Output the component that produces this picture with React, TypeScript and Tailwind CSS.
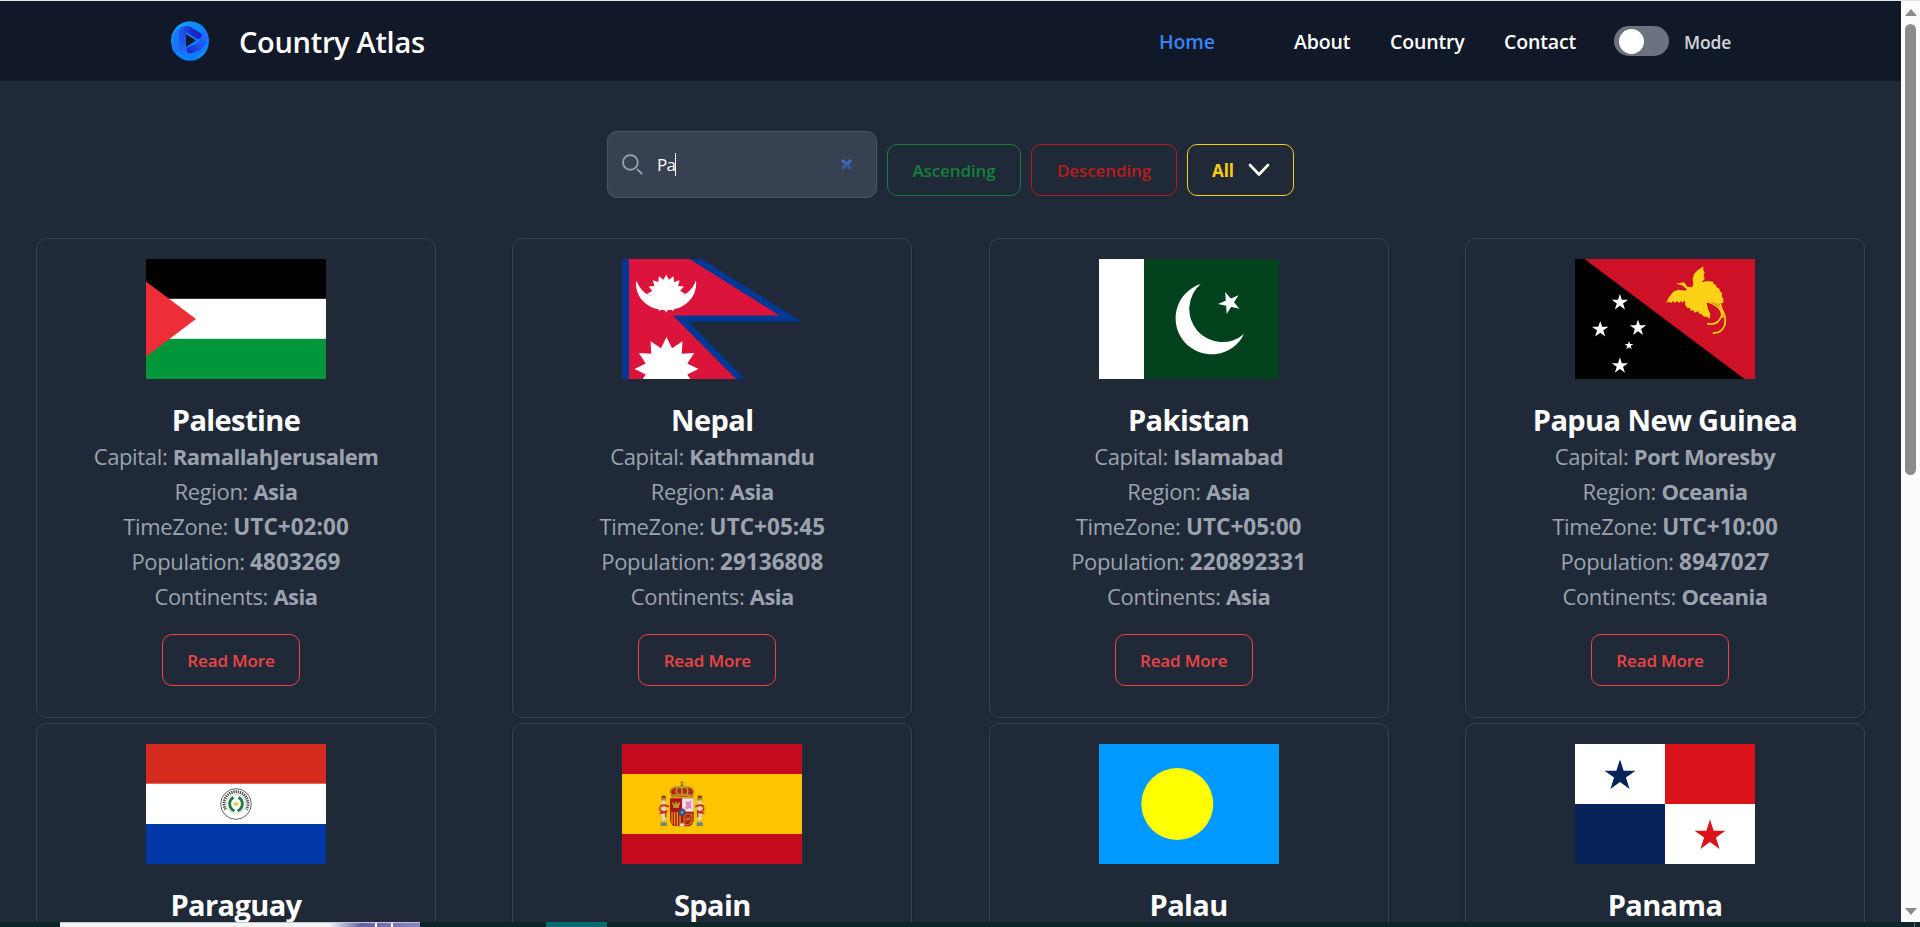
import type { ReactNode } from "react";

type Country = {
  name: string;
  flag: ReactNode;
  facts?: { capital: string; region: string; timezone: string; population: string };
};

/** Points of a star polygon centred on (cx, cy). */
function burst(cx: number, cy: number, outer: number, inner: number, tips: number) {
  return Array.from({ length: tips * 2 }, (_, i) => {
    const r = i % 2 ? inner : outer;
    const a = (Math.PI * i) / tips - Math.PI / 2;
    return `${(cx + r * Math.cos(a)).toFixed(2)},${(cy + r * Math.sin(a)).toFixed(2)}`;
  }).join(" ");
}

function Star({ x, y, r, fill }: { x: number; y: number; r: number; fill: string }) {
  return <polygon points={burst(x, y, r, r * 0.382, 5)} fill={fill} />;
}

function Flag({ children }: { children: ReactNode }) {
  return (
    <svg viewBox="0 0 180 120" className="block h-[120px] w-[180px] shrink-0">
      {children}
    </svg>
  );
}

const palestine = (
  <Flag>
    <rect width="180" height="40" fill="#000" />
    <rect y="39.8" width="180" height="40.2" fill="#fff" />
    <rect y="79.8" width="180" height="40.2" fill="#009639" />
    <path d="M0 22.5 50 60 0 97.5z" fill="#ed2e38" />
  </Flag>
);

const nepal = (
  <Flag>
    <path d="M0 0H80L180 62.800H67L123 120H0z" fill="#003893" />
    <path d="M7 0H67.500L157.500 56.500H51L114 120H7z" fill="#dc143c" />
    <path d="M14.300 21.500C18 31 24 36 31 37L44 42 57 37C64 36 70.500 31 74 21.500 76 38 62 51.200 44.200 51.200 26 51.200 12 38 14.300 21.500z" fill="#fff" />
    <polygon points={burst(44.2, 34.8, 19, 14.2, 16)} fill="#fff" />
    <polygon points={burst(44.5, 110, 32, 21.5, 12)} fill="#fff" />
  </Flag>
);

const pakistan = (
  <Flag>
    <rect width="180" height="120" fill="#01411c" />
    <rect width="45" height="120" fill="#fff" />
    <path d="M101.700 25A36 36 0 1 0 145 75 33 33 0 1 1 101.700 25z" fill="#fff" />
    <path d="M126.200 33 140.500 49.700 119 45 139.500 36.300 127.700 55z" fill="#fff" />
  </Flag>
);

const papua = (
  <Flag>
    <rect width="180" height="120" fill="#000" />
    <path d="M9.500 0H180V120H169.500z" fill="#ce1126" />
    <Star x={44.9} y={43.5} r={8.6} fill="#fff" />
    <Star x={25.2} y={70.5} r={8.6} fill="#fff" />
    <Star x={63} y={69} r={8.6} fill="#fff" />
    <Star x={54} y={86.5} r={4.6} fill="#fff" />
    <Star x={44.9} y={106.8} r={8.6} fill="#fff" />
    <g transform="scale(.33333) translate(-75 -57)">
      <path
        fill="#fcd116"
        d="M378 131 402 127 412 140 426 142 430 133 428 116 432 102 444 90 460 79 460 90 464 98 461 106 464 116 455 127 472 123 490 125 489 130 498 136 500 142 508 146 510 154 516 160 516 170 520 176 520 189 512 190 500 192 484 187 470 189 474 206 481 222 479 236 470 230 462 230 454 222 448 222 444 214 434 218 430 211 422 212 420 204 412 204 406 196 405 181 398 188 393 183 387 189 381 183 375 189 369 184 363 189 357 185 348 188 358 170 370 155 386 149 408 152 410 147 396 136z"
      />
      <g fill="none" stroke="#fcd116" strokeWidth="5">
        <path d="M476 186q38 14 40 38-10 34-45 27" />
        <path d="M496 186q38 34 28 70-9 25-36 23" />
        <path d="M506 182q14 26 12 52" />
      </g>
    </g>
  </Flag>
);

const paraguay = (
  <Flag>
    <rect width="180" height="120" fill="#fff" />
    <rect width="180" height="39.700" fill="#d52b1e" />
    <rect y="80" width="180" height="40" fill="#0038a8" />
    <circle cx="90" cy="60" r="15.300" fill="none" stroke="#3c3c3c" strokeWidth=".8" />
    <path d="M79.500 65.500A12 12 0 1 1 100.500 65.500" fill="none" stroke="#444" strokeWidth="2.800" strokeDasharray="1.300 .9" />
    <circle cx="90" cy="60" r="9.600" fill="none" stroke="#aaa" strokeWidth=".5" />
    <path d="M87.500 53.500C82.500 56 82 64 88.500 67" fill="none" stroke="#1d7a45" strokeWidth="2.800" />
    <path d="M92.500 53.500C97.500 56 98 64 91.500 67" fill="none" stroke="#1d7a45" strokeWidth="2.800" />
    <Star x={90} y={60} r={3.3} fill="#f2c52c" />
  </Flag>
);

function Pillar({ x }: { x: number }) {
  return (
    <g>
      <rect x={x} y="92" width="10" height="66" fill="#d9d5cd" />
      <rect x={x - 3} y="84" width="16" height="7" fill="#b08a1c" />
      <rect x={x - 1} y="77" width="12" height="7" fill="#9c2a1c" />
      <rect x={x - 4} y="157" width="18" height="11" fill="#6c8580" />
      <rect x={x - 2} y="152" width="14" height="5" fill="#d8b21c" />
    </g>
  );
}

const spain = (
  <Flag>
    <rect width="180" height="120" fill="#c60b1e" />
    <rect y="30" width="180" height="60" fill="#ffc400" />
    <g transform="translate(17.700 26) scale(.33333)">
      <Pillar x={67} />
      <Pillar x={175} />
      <path d="M62 110q6-8 26 0M60 128q16 2 22-6M192 110q-6-8-26 0M194 128q-16 2-22-6" fill="none" stroke="#c0302a" strokeWidth="6" />
      <path d="M60 110v10l18 8v14M192 110v10l-18 8v14" fill="none" stroke="#c0302a" strokeWidth="4" />
      <path d="M91 85h71v62q0 22-22 22h-27q-22 0-22-22z" fill="#ad1519" />
      <path d="M127 85h35v40h-35z" fill="#eee3e6" />
      <path d="M136 95h12l8-4-3 12 3 14-8-3-6 4-6-3 4-10z" fill="#e08ab8" />
      <path d="M101 114v-8h-3v-9h5v4h4v-6h5v6h4v-4h5v9h-3v8z" fill="#b79a2c" />
      <path d="M97 126v36M105 126v40M113 126v42M121 126v42" stroke="#ddb01c" strokeWidth="3.500" />
      <path d="M133 132h24v22q-3 10-14 10h-10z" fill="none" stroke="#d9a51b" strokeWidth="2.500" />
      <path d="m134 133 22 28m0-28-22 28M133 147h24" stroke="#d9a51b" strokeWidth="2" />
      <ellipse cx="127" cy="127" rx="10" ry="11" fill="#1f5fae" stroke="#a32118" strokeWidth="2" />
      <circle cx="127" cy="127" r="3.500" fill="#cfae2a" />
      <path d="M120 169q0-9 7-11 7 2 7 11z" fill="#ddd" />
      <path d="M96 82q-10-22 8-29 12-4 23 1 11-5 23-1 18 7 8 29z" fill="#ad2a1c" />
      <path d="M96 76q-12-18 6-24 14-4 25 2 11-6 25-2 18 6 6 24M112 72q-6-14 4-19M142 72q6-14-4-19M127 52v22" fill="none" stroke="#c89a1e" strokeWidth="4.500" />
      <path d="M97 74q30-9 60 0v9q-30-7-60 0z" fill="#b98c22" />
      <circle cx="127" cy="46" r="5" fill="#7f8a3a" />
      <path d="M127 33v12M122 38h10" stroke="#8a7a25" strokeWidth="3" />
    </g>
  </Flag>
);

const palau = (
  <Flag>
    <rect width="180" height="120" fill="#0099ff" />
    <circle cx="78.300" cy="60" r="36" fill="#ffff00" />
  </Flag>
);

const panama = (
  <Flag>
    <rect width="180" height="120" fill="#fff" />
    <rect x="90" width="90" height="60" fill="#da121a" />
    <rect y="60" width="90" height="60" fill="#072357" />
    <Star x={45} y={31.7} r={16.3} fill="#072357" />
    <Star x={135} y={91.7} r={16.3} fill="#da121a" />
  </Flag>
);

const countries: Country[] = [
  { name: "Palestine", flag: palestine, facts: { capital: "RamallahJerusalem", region: "Asia", timezone: "UTC+02:00", population: "4803269" } },
  { name: "Nepal", flag: nepal, facts: { capital: "Kathmandu", region: "Asia", timezone: "UTC+05:45", population: "29136808" } },
  { name: "Pakistan", flag: pakistan, facts: { capital: "Islamabad", region: "Asia", timezone: "UTC+05:00", population: "220892331" } },
  { name: "Papua New Guinea", flag: papua, facts: { capital: "Port Moresby", region: "Oceania", timezone: "UTC+10:00", population: "8947027" } },
  { name: "Paraguay", flag: paraguay },
  { name: "Spain", flag: spain },
  { name: "Palau", flag: palau },
  { name: "Panama", flag: panama },
];

function Fact({ label, value, numeric = false }: { label: string; value: string; numeric?: boolean }) {
  return (
    <p className="text-[22px] leading-[35px] tracking-[-0.35px] whitespace-nowrap text-[#9ca3af]">
      {label}:{" "}
      <span className={numeric ? "text-[22.5px] font-bold tracking-[0.05px]" : "font-bold tracking-[-0.5px]"}>{value}</span>
    </p>
  );
}

function Card({ country }: { country: Country }) {
  const { facts } = country;
  return (
    <article className="flex h-[480px] w-[400px] flex-col items-center rounded-[10px] border border-[#374151] bg-[#1f2937] pt-5 shadow-sm">
      {country.flag}
      <h2 className="pt-[21px] text-[29px] leading-[39px] font-bold tracking-[-0.6px] text-white">{country.name}</h2>
      {facts && (
        <>
          <Fact label="Capital" value={facts.capital} />
          <Fact label="Region" value={facts.region} />
          <Fact label="TimeZone" value={facts.timezone} numeric />
          <Fact label="Population" value={facts.population} numeric />
          <Fact label="Continents" value={facts.region} />
          <button className="mt-5 mr-2.5 h-[52px] w-[138px] rounded-[10px] border border-[#ef4444] pt-0.5 text-[17px] font-semibold tracking-[-0.15px] text-[#ef4444]">
            Read More
          </button>
        </>
      )}
    </article>
  );
}

function Logo() {
  return (
    <svg viewBox="0 0 38 40" className="h-10 w-[38px]">
      <defs>
        <linearGradient id="ring" x1="0" y1="0" x2="1" y2="1">
          <stop offset="0" stopColor="#22b4ff" />
          <stop offset=".3" stopColor="#0a90ff" />
          <stop offset=".75" stopColor="#0b7dff" />
          <stop offset="1" stopColor="#1cb0ff" />
        </linearGradient>
        <linearGradient id="side" gradientUnits="userSpaceOnUse" x1="0" y1="6" x2="0" y2="36">
          <stop offset="0" stopColor="#1b3ee0" />
          <stop offset="1" stopColor="#1f78ff" />
        </linearGradient>
        <linearGradient id="upper" gradientUnits="userSpaceOnUse" x1="8" y1="0" x2="30" y2="0">
          <stop offset="0" stopColor="#2060f5" />
          <stop offset=".6" stopColor="#1a28cc" />
          <stop offset="1" stopColor="#1a22c4" />
        </linearGradient>
        <linearGradient id="lower" gradientUnits="userSpaceOnUse" x1="36" y1="12" x2="16" y2="32">
          <stop offset="0" stopColor="#1e74ff" />
          <stop offset=".5" stopColor="#1e50f0" />
          <stop offset="1" stopColor="#1a24c8" />
        </linearGradient>
      </defs>
      <ellipse cx="19" cy="20" rx="19" ry="19.700" fill="url(#ring)" />
      <g fill="none" strokeWidth="7" strokeLinecap="round" strokeLinejoin="round">
        <path d="M5 28Q3 14 11 9" stroke="#1677f8" />
        <path d="M11.500 30V12" stroke="url(#side)" />
        <path d="M33 14q1 8-6 12L19 29" stroke="url(#lower)" />
        <path d="M11.500 11Q14 7.500 18 9l9 5.500" stroke="url(#upper)" />
      </g>
      <path d="M15 13v13l10-6.500z" fill="#111827" />
    </svg>
  );
}

function Header() {
  return (
    <header className="flex h-20 shrink-0 items-center bg-[#111827] pr-[170px] pl-[171px] text-[19.5px] font-semibold tracking-[-0.15px] text-white">
      <Logo />
      <h1 className="ml-[30px] pt-0.5 text-[29px] leading-10 tracking-[-0.3px] whitespace-nowrap">Country Atlas</h1>
      <nav className="ml-auto flex items-center pt-0.5">
        <a className="w-[135px] text-[#3b82f6]">Home</a>
        <a className="w-24">About</a>
        <a className="w-[114px]">Country</a>
        <a className="w-[110px]">Contact</a>
      </nav>
      <span className="flex h-[30px] w-[55px] items-center rounded-full bg-[#6b7280] pl-[5px]">
        <span className="size-[25px] rounded-full bg-white" />
      </span>
      <span className="ml-[15px] w-[47px] pt-0.5 text-[17.5px] text-[#d1d5db]">Mode</span>
    </header>
  );
}

function Toolbar() {
  return (
    <div className="flex justify-center gap-2.5 pt-[50px] text-[17px] font-semibold tracking-[-0.1px]">
      <div className="flex h-[67px] w-[270px] items-center rounded-[10px] border border-[#4b5563] bg-[#374151] pr-6 pl-3.5 text-[17px] font-normal text-white">
        <svg viewBox="0 0 20 20" className="size-[21px]" fill="none" stroke="#9ca3af" strokeWidth="1.700" strokeLinecap="round">
          <circle cx="8" cy="8" r="7" />
          <path d="m14.800 14.800 4 4" />
        </svg>
        <span className="ml-3.5 pt-px tracking-[-0.8px]">Pa</span>
        <span className="h-[23px] w-px bg-white" />
        <svg viewBox="0 0 11 11" className="ml-auto size-[11px]" fill="none" strokeWidth="3">
          <defs>
            <linearGradient id="clear" gradientUnits="userSpaceOnUse" x1="0" y1="0" x2="0" y2="11">
              <stop offset="0" stopColor="#3f78d0" />
              <stop offset="1" stopColor="#2c4f92" />
            </linearGradient>
          </defs>
          <path d="m1 1 9 9M10 1l-9 9" stroke="url(#clear)" />
        </svg>
      </div>
      <button className="mt-[13px] h-[52px] w-[134px] rounded-[10px] border border-[#15803d] pt-0.5 text-[#15803d]">Ascending</button>
      <button className="mt-[13px] h-[52px] w-[146px] rounded-[10px] border border-[#b91c1c] pt-0.5 text-[#b91c1c]">Descending</button>
      <button className="mt-[13px] flex h-[52px] w-[107px] items-center rounded-[10px] border border-[#facc15] pl-6 text-[#facc15]">
        <span className="pt-0.5 font-bold">All</span>
        <svg viewBox="0 0 22 14" className="ml-3.5 h-3.5 w-[22px]" fill="none" stroke="#fff" strokeWidth="2.600" strokeLinecap="round" strokeLinejoin="round">
          <path d="m2 2 9 9.500L20 2" />
        </svg>
      </button>
    </div>
  );
}

function Scrollbar() {
  return (
    <div className="flex w-[19px] shrink-0 flex-col items-center bg-[#fcfcfc] pt-2">
      <svg viewBox="0 0 12 7" className="h-[7px] w-3">
        <path d="M6 0 12 7H0z" fill="#8b8b8b" />
      </svg>
      <div className="mt-2 h-[451px] w-[11px] rounded-full bg-[#8b8b8b]" />
      <svg viewBox="0 0 12 7" className="mt-auto mb-[7px] h-[7px] w-3">
        <path d="M0 0H12L6 7z" fill="#8b8b8b" />
      </svg>
    </div>
  );
}

function DesktopEdge() {
  return (
    <div className="flex h-[5px] shrink-0 bg-[#0c2526]">
      <div className="ml-[60px] flex w-[360px] border-t border-[#c4c6c6] bg-[#f3f4f4]">
        <div className="ml-[270px] flex w-[90px] bg-linear-to-r from-[#f3f4f4] via-[#6660a8] via-35% to-[#8a86c4]">
          <div className="ml-[45px] w-0.5 bg-white" />
          <div className="ml-3.5 w-0.5 bg-white" />
        </div>
      </div>
      <div className="ml-[126px] w-[61px] bg-[#056b70]" />
      <div className="mr-[5px] ml-auto w-px bg-[#5d6f6f]" />
    </div>
  );
}

export default function App() {
  return (
    <div className="flex h-[927px] w-[1920px] flex-col overflow-hidden bg-[#1f2937] font-['Open_Sans','Noto_Sans',sans-serif]">
      <div className="h-px shrink-0 bg-[#dfe7e2]" />
      <div className="flex min-h-0 flex-1">
        <main className="flex min-w-0 flex-1 flex-col overflow-hidden">
          <Header />
          <Toolbar />
          <section className="mt-10 grid shrink-0 grid-cols-[repeat(4,400px)] justify-between gap-y-[5px] px-9">
            {countries.map((country) => (
              <Card key={country.name} country={country} />
            ))}
          </section>
        </main>
        <Scrollbar />
      </div>
      <DesktopEdge />
    </div>
  );
}
